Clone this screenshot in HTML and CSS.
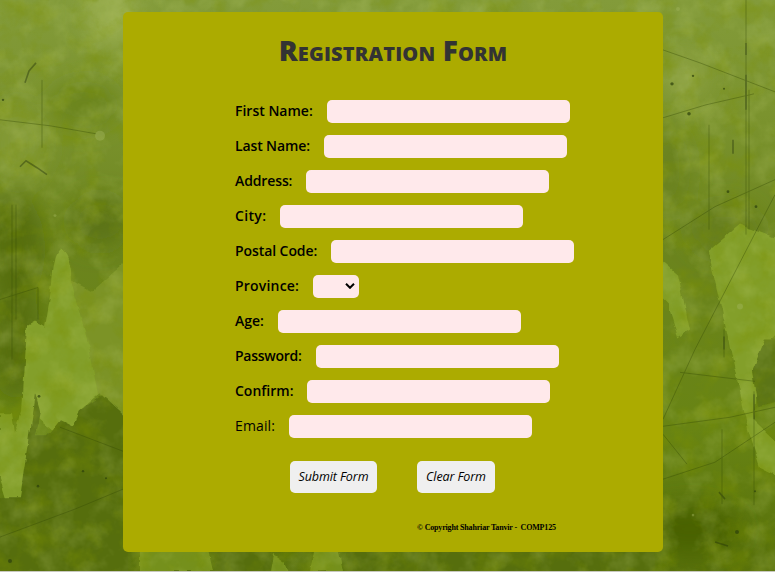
FILE: index.html
```html
<!DOCTYPE html>
<html lang="en">
<head>
<meta charset="utf-8">
<title>Registration Form</title>
<link rel="stylesheet" href="styles.css">
</head>
<body>
<svg class="backdrop" viewBox="0 0 775 572" preserveAspectRatio="none" aria-hidden="true">
  <defs>
    <linearGradient id="base" x1="0" y1="0" x2="0" y2="1">
      <stop offset="0" stop-color="#839b3a"/>
      <stop offset=".2" stop-color="#7b932e"/>
      <stop offset=".45" stop-color="#6b841d"/>
      <stop offset=".75" stop-color="#688414"/>
      <stop offset="1" stop-color="#566f0a"/>
    </linearGradient>
    <filter id="soft" x="-50%" y="-50%" width="200%" height="200%"><feGaussianBlur stdDeviation="11"/></filter>
    <filter id="rough" x="-10%" y="-10%" width="120%" height="120%">
      <feTurbulence type="fractalNoise" baseFrequency=".07" numOctaves="3" seed="4"/>
      <feDisplacementMap in="SourceGraphic" scale="6" xChannelSelector="R" yChannelSelector="G"/>
      <feGaussianBlur stdDeviation=".7"/>
    </filter>
    <filter id="dark" x="0" y="0" width="100%" height="100%">
      <feTurbulence type="fractalNoise" baseFrequency=".04" numOctaves="5" seed="8"/>
      <feColorMatrix values="0 0 0 0 .2  0 0 0 0 .28  0 0 0 0 0  1.8 0 0 0 -.8"/>
    </filter>
    <filter id="light" x="0" y="0" width="100%" height="100%">
      <feTurbulence type="fractalNoise" baseFrequency=".04" numOctaves="4" seed="21"/>
      <feColorMatrix values="0 0 0 0 .6  0 0 0 0 .7  0 0 0 0 .22  0 1.6 0 0 -.7"/>
    </filter>
  </defs>
  <rect width="775" height="572" fill="url(#base)"/>
  <g filter="url(#soft)">
    <ellipse cx="112" cy="15" rx="28" ry="34" fill="#96ab4b"/>
    <ellipse cx="18" cy="145" rx="28" ry="38" fill="#839a34"/>
    <ellipse cx="84" cy="105" rx="36" ry="24" fill="#6c851f"/>
    <ellipse cx="100" cy="222" rx="30" ry="26" fill="#5b7312"/>
    <ellipse cx="15" cy="250" rx="30" ry="55" fill="#566e0e"/>
    <ellipse cx="15" cy="340" rx="26" ry="60" fill="#566e0e"/>
    <ellipse cx="683" cy="75" rx="24" ry="25" fill="#8ba041"/>
    <ellipse cx="670" cy="170" rx="20" ry="45" fill="#6a821e"/>
    <ellipse cx="725" cy="230" rx="35" ry="25" fill="#667e1b"/>
    <ellipse cx="690" cy="530" rx="50" ry="25" fill="#496204"/>
  </g>
  <g filter="url(#rough)" fill="#839f29">
    <path fill="#7b9327" d="M70 280L92 292 128 260V425L100 395 78 410 67 350Z"/>
    <path d="M52 285Q54 252 61 250Q72 258 72 285L90 350 98 396 79 412 75 428 52 430 37 418 32 450 20 499 6 499 0 480V414H12L15 434 22 412 27 326 34 322 45 328Z"/>
    <path d="M655 255L678 275 690 330 678 338 668 305 658 295Z"/>
    <path d="M708 252L740 225 780 240V330L762 350 754 420 780 445V478L760 468 748 430 733 362 724 320Z"/>
    <path fill="#74901b" d="M140 552V572H213L208 550ZM271 572L274 555 284 562 289 572ZM310 572L315 547 338 548 343 572Z"/>
    <path fill="#566e10" d="M35 394L40 412 35 436H48L60 421 74 428 80 411 102 396 128 420V576H-5V498H20Z"/>
    <path fill="#5b7413" d="M752 372L765 340 780 340V402L758 408Z"/>
    <path fill="#566e10" d="M213 550H272L268 576H216ZM345 550H655V576H348Z"/>
  </g>
  <rect width="775" height="572" filter="url(#dark)" opacity=".6"/>
  <rect width="775" height="572" filter="url(#light)" opacity=".3"/>
  <g class="scratches">
    <path d="M0 120L50 126 96 134M42 80V148M0 300L38 288M38 288V320M12 205V360M16 205V320M0 538L75 510 123 490M60 428L123 452"/>
    <path d="M663 50L700 63 775 92M663 118L706 105 754 94M663 240L715 207 775 180M746 0V235M749 90V230M709 125V230M663 420L695 350 775 195M663 427L730 418 775 408M663 480L715 463 775 423M663 435L687 465M680 373L755 382M722 430V505M754 392V506M724 330V358"/>
    <path class="deep" d="M25 83L29 71 36 63M20 167L26 161 37 168 47 175M746 75V110M746 43V55M733 140V154M724 337V350M754 395V420M715 543L728 547M719 493L725 500"/>
  </g>
  <g class="specks">
    <circle cx="672" cy="84" r="1.7"/><circle cx="693" cy="76" r="1.2"/><circle cx="689" cy="114" r="1.8"/><circle cx="724" cy="89" r="1"/><circle cx="756" cy="207" r="1.4"/><circle cx="728" cy="192" r="1.4"/><circle cx="737" cy="533" r="2"/><circle cx="755" cy="492" r="1"/><circle cx="3" cy="100" r="1.2"/><circle cx="38" cy="487" r="1.3"/><circle cx="83" cy="472" r="1.2"/><circle cx="106" cy="479" r="1"/><circle cx="10" cy="562" r="2"/><circle cx="39" cy="397" r="1.4"/>
  </g>
  <g class="chips">
    <circle cx="100" cy="136" r="5"/><circle cx="55" cy="216" r="1.5"/><circle cx="678" cy="9" r="2"/><circle cx="740" cy="307" r="3"/><circle cx="693" cy="516" r="1.3"/>
  </g>
</svg>
<main class="card">
  <h1>Registration Form</h1>
  <form class="fields">
    <div class="row"><label class="first" for="first">First Name:</label><input id="first" type="text"></div>
    <div class="row"><label class="last" for="last">Last Name:</label><input id="last" type="text"></div>
    <div class="row"><label class="address" for="address">Address:</label><input id="address" type="text"></div>
    <div class="row"><label class="city" for="city">City:</label><input id="city" type="text"></div>
    <div class="row"><label class="postal" for="postal">Postal Code:</label><input id="postal" type="text"></div>
    <div class="row"><label class="province" for="province">Province:</label><div class="select"><select id="province"><option></option></select><svg class="chevron" viewBox="0 0 10 6" aria-hidden="true"><path d="M1 .8L5 4.8 9 .8"/></svg></div></div>
    <div class="row"><label class="age" for="age">Age:</label><input id="age" type="text"></div>
    <div class="row"><label class="password" for="password">Password:</label><input id="password" type="password"></div>
    <div class="row"><label class="confirm" for="confirm">Confirm:</label><input id="confirm" type="password"></div>
    <div class="row"><label class="email" for="email">Email:</label><input id="email" type="text"></div>
    <div class="actions"><button class="submit" type="button">Submit Form</button><button class="clear" type="button">Clear Form</button></div>
  </form>
  <footer>© Copyright Shahriar Tanvir -&nbsp; COMP125</footer>
</main>
</body>
</html>
```
FILE: styles.css
```css
* { box-sizing: border-box; }
html { height: 100%; }
body {
  margin: 0;
  height: 572px;
  padding-top: 12px;
  overflow: hidden;
  border-bottom: 1px solid #c8c8bf;
}
.backdrop {
  position: absolute;
  inset: 0;
  z-index: -1;
  width: 775px;
  height: 571px;
}
.scratches { fill: none; stroke: #344a05; stroke-width: .9; opacity: .42; }
.deep { stroke: #20300a; stroke-width: 1.6; }
.specks { fill: #2c400b; opacity: .7; }
.chips { fill: #a0b45a; opacity: .45; }
.card {
  width: 540px;
  height: 540px;
  margin-left: 123px;
  background: #acab00;
  border-radius: 5px;
  overflow: hidden;
}
h1 {
  margin: 18px 0 0;
  height: 41px;
  font: 800 28px/40px "Open Sans", "Noto Sans", sans-serif;
  font-variant: small-caps;
  letter-spacing: .17px;
  text-align: center;
  white-space: nowrap;
  color: #333;
}
.fields {
  display: flex;
  flex-direction: column;
  gap: 12px;
  margin: 29px 0 0 112px;
}
.row { display: flex; height: 23px; }
label {
  flex: none;
  font: 600 14px/22px "Open Sans", "Noto Sans", sans-serif;
  white-space: nowrap;
  color: #000;
}
.first { width: 92px; }
.last { width: 89px; letter-spacing: -.12px; }
.address { width: 71px; letter-spacing: -.12px; }
.city { width: 45px; letter-spacing: .35px; }
.postal { width: 96px; letter-spacing: -.08px; }
.province { width: 78px; letter-spacing: .2px; }
.age { width: 43px; }
.password { width: 81px; letter-spacing: -.25px; }
.confirm { width: 72px; }
.email { width: 54px; font-weight: 400; letter-spacing: .12px; }
input, select {
  width: 243px;
  height: 23px;
  margin: 0;
  padding: 0 5px;
  border: 0;
  border-radius: 5px;
  background: #ffe9eb;
}
.select { position: relative; width: 46px; height: 23px; }
select { width: 46px; appearance: none; }
.chevron { position: absolute; left: 32px; top: 8px; width: 10px; height: 6px; }
.chevron path { fill: none; stroke: #000; stroke-width: 2; }
.actions { display: flex; gap: 40px; margin: 11px 0 0 55px; }
button {
  height: 32px;
  padding: 0;
  border: 0;
  border-radius: 5px;
  background: #efefef;
  color: #000;
  font: italic 400 12.5px/32px "Open Sans", "Noto Sans", sans-serif;
  letter-spacing: -.1px;
  white-space: nowrap;
}
.submit { width: 87px; }
.clear { width: 78px; }
footer {
  margin: 29px 0 0 294px;
  font: bold 8px/11px "Liberation Serif", serif;
  letter-spacing: -.17px;
  white-space: nowrap;
  color: #000;
}
```
